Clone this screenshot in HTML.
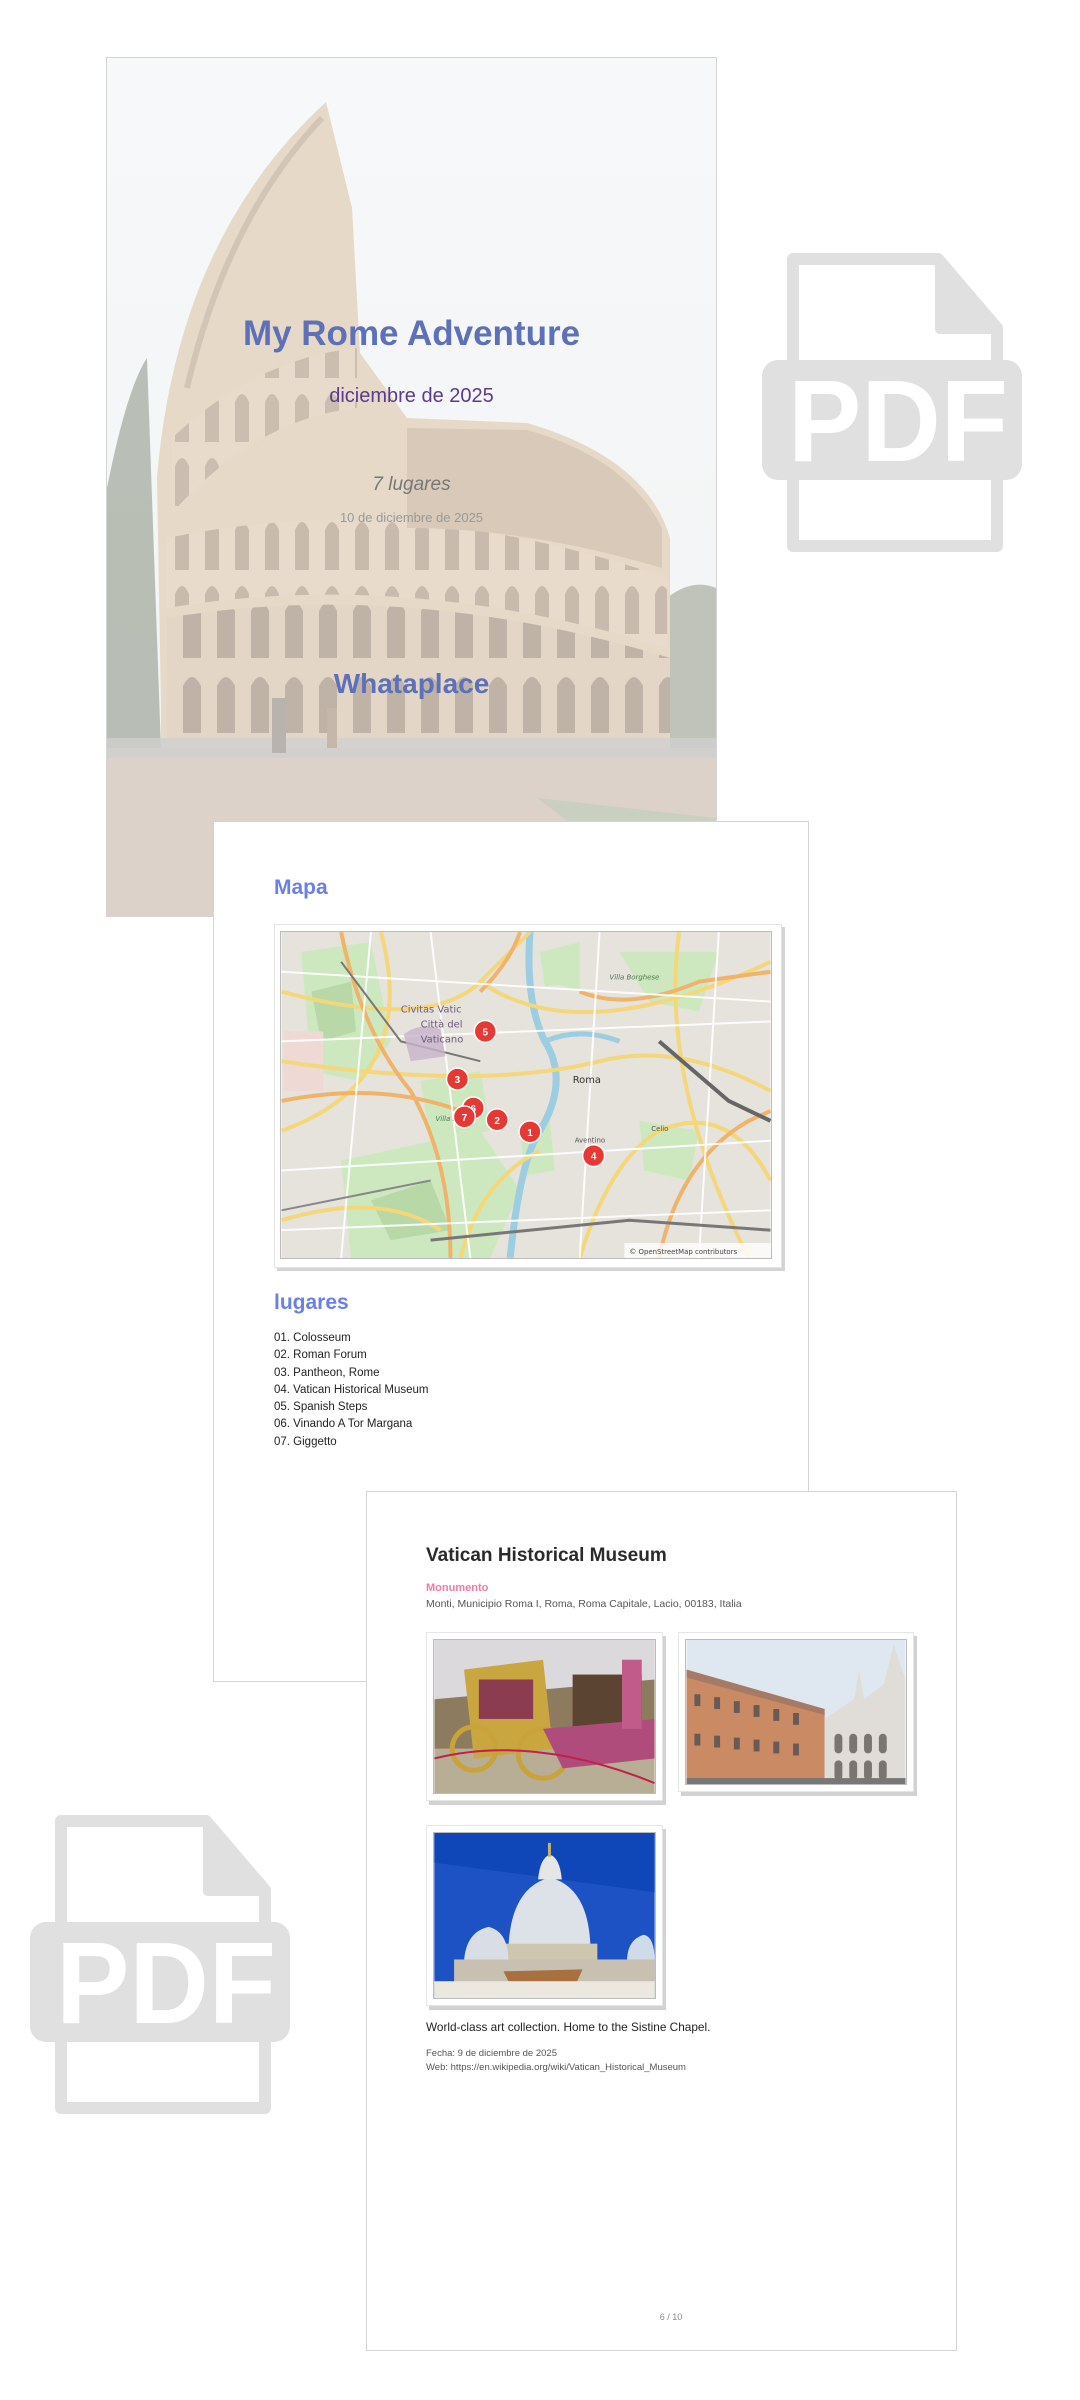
<!DOCTYPE html>
<html><head><meta charset="utf-8"><style>
*{margin:0;padding:0;box-sizing:border-box}
body{width:1080px;height:2400px;background:#fff;position:relative;overflow:hidden;font-family:"Liberation Sans",Arial,sans-serif}
.abs{position:absolute}
.page{position:absolute;background:#fff;border:1.5px solid #d4d4d4}
.t{position:absolute;white-space:nowrap}
.frame{position:absolute;background:#fff;border:1px solid #e6e6e6;box-shadow:3px 4px 0 #d2d2d2}
.frame>div,.frame>svg{position:absolute;left:6px;top:6px;border:1px solid #bbb}
</style></head><body>

<!-- PDF icon top right -->
<svg class="abs" style="left:760px;top:250px" width="262" height="305" viewBox="0 0 262 305">
<path d="M33 9 H178 L237 78 V296 H33 Z" fill="none" stroke="#e0e0e0" stroke-width="12" stroke-linejoin="round"/>
<path d="M175 6 L243 78 V84 H180 Q175 84 175 78 Z" fill="#e0e0e0"/>
<rect x="2" y="110" width="260" height="120" rx="16" fill="#e0e0e0"/>
<text x="28" y="211" textLength="220" lengthAdjust="spacingAndGlyphs" font-family="Liberation Sans" font-weight="bold" font-size="116" fill="#fff">PDF</text>
</svg>

<!-- PDF icon bottom left -->
<svg class="abs" style="left:28px;top:1812px" width="262" height="305" viewBox="0 0 262 305">
<path d="M33 9 H178 L237 78 V296 H33 Z" fill="none" stroke="#e0e0e0" stroke-width="12" stroke-linejoin="round"/>
<path d="M175 6 L243 78 V84 H180 Q175 84 175 78 Z" fill="#e0e0e0"/>
<rect x="2" y="110" width="260" height="120" rx="16" fill="#e0e0e0"/>
<text x="28" y="211" textLength="220" lengthAdjust="spacingAndGlyphs" font-family="Liberation Sans" font-weight="bold" font-size="116" fill="#fff">PDF</text>
</svg>

<!-- Cover page -->
<div class="page" style="left:106px;top:57px;width:611px;height:860px;overflow:hidden">
<svg class="abs" style="left:0;top:0" width="609" height="858" viewBox="0 0 609 858">
<defs>
<linearGradient id="sky" x1="0" y1="0" x2="0" y2="1"><stop offset="0" stop-color="#f6f8fa"/><stop offset="1" stop-color="#f1f3f3"/></linearGradient>
<pattern id="arch" x="0" y="0" width="34" height="75" patternUnits="userSpaceOnUse"><rect width="34" height="75" fill="#e3d6c6"/><path d="M8 75 V28 Q17 10 26 28 V75 Z" fill="#bfb3a8"/></pattern>
<pattern id="arch2" x="0" y="0" width="30" height="64" patternUnits="userSpaceOnUse"><rect width="30" height="64" fill="#e8dbcb"/><path d="M8 64 V24 Q15 8 22 24 V64 Z" fill="#c8bbad"/></pattern>
</defs>
<rect width="609" height="858" fill="url(#sky)"/>
<path d="M0 430 Q20 330 40 300 L55 720 L0 760 Z" fill="#9fa79a" opacity=".7"/>
<path d="M560 540 Q585 520 609 530 L609 720 L560 720 Z" fill="#a9ae9f" opacity=".7"/>
<path d="M54 650 L50 420 Q70 180 219 44 L245 150 L253 295 L300 360 L420 365 Q540 400 563 480 L563 700 L54 700 Z" fill="#e6d9c8"/>
<path d="M60 620 L60 560 Q300 520 563 600 L563 700 L60 700 Z" fill="url(#arch)"/>
<path d="M60 540 L60 480 Q300 430 560 520 L560 590 Q300 510 60 550 Z" fill="url(#arch2)"/>
<path d="M65 450 L65 380 Q150 300 250 290 L250 350 Q150 360 65 455 Z" fill="url(#arch2)" opacity=".9"/>
<path d="M300 370 L420 372 Q520 400 555 470 L555 510 Q420 470 300 470 Z" fill="#d9c9b8"/>
<path d="M80 330 Q120 160 215 60" stroke="#d2c5b5" stroke-width="6" fill="none"/>
<rect x="0" y="690" width="609" height="168" fill="#dcd2c9"/>
<rect x="0" y="680" width="609" height="20" fill="#cfcfd0" opacity=".8"/>
<path d="M430 740 L609 760 L609 790 L470 770 Z" fill="#c9cfc1"/>
<rect x="165" y="640" width="14" height="55" fill="#b9b3b0"/><rect x="220" y="650" width="10" height="40" fill="#c5b8aa"/>
</svg>
<div class="t" style="left:0;width:609px;text-align:center;top:256px;font-size:35px;font-weight:bold;color:#5d70b8">My Rome Adventure</div>
<div class="t" style="left:0;width:609px;text-align:center;top:327px;font-size:20px;color:#5b3a8f">diciembre de 2025</div>
<div class="t" style="left:0;width:609px;text-align:center;top:416px;font-size:19px;font-style:italic;color:#777">7 lugares</div>
<div class="t" style="left:0;width:609px;text-align:center;top:452px;font-size:13px;color:#999">10 de diciembre de 2025</div>
<div class="t" style="left:0;width:609px;text-align:center;top:610px;font-size:28px;font-weight:bold;color:#5d70b8">Whataplace</div>
</div>

<!-- Page 2 -->
<div class="page" style="left:213px;top:821px;width:596px;height:861px"></div>
<div class="t" style="left:274px;top:876px;font-size:21px;font-weight:bold;color:#6a80e6">Mapa</div>
<div class="abs" style="left:274px;top:924px;width:508px;height:344px;background:#fff;border:1px solid #e4e4e4;box-shadow:3px 3px 0 #d4d4d4"></div>
<svg class="abs" style="left:280px;top:931px;border:1px solid #bbb" width="492" height="328" viewBox="0 0 492 328">
<rect width="492" height="328" fill="#e6e2dc"/>
<g fill="#cde8bf">
<path d="M20 20 L90 10 L110 110 L80 150 L30 140 Z"/>
<path d="M60 230 L200 200 L240 260 L210 328 L70 328 Z"/>
<path d="M140 150 L200 140 L210 200 L150 210 Z"/>
<path d="M260 20 L300 10 L300 60 Q280 50 265 55 Z"/>
<path d="M340 20 L440 20 L420 80 L370 70 Z"/>
<path d="M240 200 L270 190 L275 240 L245 245 Z"/>
<path d="M360 190 L420 200 L410 250 L365 240 Z"/>
</g>
<g fill="#b8d8a8"><path d="M90 270 L150 250 L170 300 L110 310 Z"/><path d="M30 60 L70 50 L75 100 L40 110 Z"/></g>
<rect x="2" y="100" width="40" height="60" fill="#eed9d4"/>
<path d="M250 0 Q245 70 265 110 Q290 150 260 200 Q240 230 230 328" stroke="#9ccde0" stroke-width="7" fill="none"/>
<path d="M265 110 Q300 95 340 110" stroke="#9ccde0" stroke-width="5" fill="none"/>
<g stroke="#f3d77a" stroke-width="4" fill="none">
<path d="M0 60 Q150 100 200 50 L250 0"/><path d="M100 0 Q140 150 0 200"/><path d="M200 50 Q300 120 492 30"/>
<path d="M0 130 Q200 160 320 130 Q400 110 492 160"/><path d="M300 328 Q330 230 380 200 Q450 170 492 250"/>
<path d="M180 328 Q200 250 260 220"/><path d="M400 0 Q380 150 470 328"/><path d="M0 290 Q100 260 160 300"/>
</g>
<g stroke="#f0b36a" stroke-width="4" fill="none">
<path d="M60 0 Q80 100 130 160 Q170 230 170 328"/><path d="M0 170 Q100 150 180 180"/><path d="M300 60 Q350 80 420 50 L492 40"/>
<path d="M380 328 Q400 230 470 190 L492 180"/><path d="M200 60 Q230 30 240 0"/>
</g>
<g stroke="#fff" stroke-width="2" fill="none" opacity=".9">
<path d="M0 40 L492 70"/><path d="M0 110 L492 90"/><path d="M0 240 L492 210"/><path d="M150 0 L190 328"/><path d="M320 0 L300 328"/><path d="M440 0 L420 328"/><path d="M0 300 L492 280"/><path d="M90 0 L60 328"/>
</g>
<path d="M60 30 L120 110 L200 130" stroke="#777" stroke-width="2" fill="none"/>
<path d="M380 110 L450 170 L492 190" stroke="#666" stroke-width="4" fill="none"/>
<path d="M0 280 L150 250" stroke="#888" stroke-width="2" fill="none"/>
<path d="M150 310 L350 290 L492 300" stroke="#777" stroke-width="3" fill="none"/>
<path d="M123 103 Q140 90 160 98 L165 125 L130 130 Z" fill="#c8b4cc" opacity=".8"/>
<text x="120" y="81" font-family="DejaVu Sans" font-size="10" fill="#6e5a80">Civitas Vatic</text>
<text x="140" y="96" font-family="DejaVu Sans" font-size="10" fill="#6e5a80">Città del</text>
<text x="140" y="111" font-family="DejaVu Sans" font-size="10" fill="#6e5a80">Vaticano</text>
<text x="293" y="152" font-family="DejaVu Sans" font-size="10" fill="#333">Roma</text>
<text x="295" y="212" font-family="DejaVu Sans" font-size="7" fill="#555">Aventino</text>
<text x="372" y="200" font-family="DejaVu Sans" font-size="7" fill="#555">Celio</text>
<text x="155" y="190" font-family="DejaVu Sans" font-size="7" font-style="italic" fill="#4a7a4a">Villa Doria</text>
<text x="330" y="48" font-family="DejaVu Sans" font-size="7" font-style="italic" fill="#4a7a4a">Villa Borghese</text>
<rect x="345" y="313" width="147" height="15" fill="#fff" opacity=".8"/>
<text x="350" y="324" font-family="DejaVu Sans" font-size="7" fill="#444">© OpenStreetMap contributors</text>
<g font-family="Liberation Sans" font-weight="bold" font-size="10" fill="#fff" text-anchor="middle">
<g><circle cx="205" cy="100" r="11" fill="#e53935" stroke="#fff" stroke-width="1.5"/><text x="205" y="104">5</text></g>
<g><circle cx="177" cy="148" r="11" fill="#e53935" stroke="#fff" stroke-width="1.5"/><text x="177" y="152">3</text></g>
<g><circle cx="193" cy="177" r="11" fill="#e53935" stroke="#fff" stroke-width="1.5"/><text x="193" y="181">6</text></g>
<g><circle cx="184" cy="186" r="11" fill="#e53935" stroke="#fff" stroke-width="1.5"/><text x="184" y="190">7</text></g>
<g><circle cx="217" cy="189" r="11" fill="#e53935" stroke="#fff" stroke-width="1.5"/><text x="217" y="193">2</text></g>
<g><circle cx="250" cy="201" r="11" fill="#e53935" stroke="#fff" stroke-width="1.5"/><text x="250" y="205">1</text></g>
<g><circle cx="314" cy="225" r="11" fill="#e53935" stroke="#fff" stroke-width="1.5"/><text x="314" y="229">4</text></g>
</g>
</svg>
<div class="t" style="left:274px;top:1291px;font-size:21px;font-weight:bold;color:#6a80e6">lugares</div>
<div class="t" style="left:274px;top:1330px;font-size:11.5px;color:#222;line-height:17.3px">01. Colosseum<br>02. Roman Forum<br>03. Pantheon, Rome<br>04. Vatican Historical Museum<br>05. Spanish Steps<br>06. Vinando A Tor Margana<br>07. Giggetto</div>

<!-- Page 3 -->
<div class="page" style="left:366px;top:1491px;width:591px;height:860px"></div>
<div class="t" style="left:426px;top:1545px;font-size:19px;font-weight:bold;color:#2a2a2a">Vatican Historical Museum</div>
<div class="t" style="left:426px;top:1582px;font-size:11px;font-weight:bold;color:#f07aa8">Monumento</div>
<div class="t" style="left:426px;top:1598px;font-size:10.5px;color:#555">Monti, Municipio Roma I, Roma, Roma Capitale, Lacio, 00183, Italia</div>

<div class="frame" style="left:426px;top:1632px;width:237px;height:169px">
<svg width="223" height="155" viewBox="0 0 223 155">
<rect width="223" height="155" fill="#8d7b5f"/>
<path d="M0 0 H223 V40 L0 60 Z" fill="#dcd9dc"/>
<path d="M0 110 H223 V155 H0 Z" fill="#b8ad95"/>
<rect x="140" y="35" width="70" height="60" fill="#5b4432"/>
<path d="M30 30 L110 20 L120 110 L40 120 Z" fill="#c9a640"/>
<rect x="45" y="40" width="55" height="40" fill="#8c3c50"/>
<circle cx="40" cy="110" r="22" fill="none" stroke="#c9a23a" stroke-width="5"/>
<circle cx="110" cy="115" r="25" fill="none" stroke="#c9a23a" stroke-width="5"/>
<path d="M110 90 L223 80 L223 120 L130 130 Z" fill="#b04c7c"/>
<rect x="190" y="20" width="20" height="70" fill="#c05b8a"/>
<path d="M0 120 Q100 95 223 145" stroke="#c0204a" stroke-width="2" fill="none"/>
</svg></div>

<div class="frame" style="left:678px;top:1632px;width:236px;height:160px">
<svg width="222" height="146" viewBox="0 0 222 146">
<rect width="222" height="146" fill="#dfe8f0"/>
<path d="M0 30 L140 70 L140 146 L0 146 Z" fill="#c98a64"/>
<path d="M0 30 L140 70 L140 76 L0 38 Z" fill="#a57a66"/>
<g fill="#6a5a55"><rect x="8" y="55" width="6" height="12"/><rect x="28" y="58" width="6" height="12"/><rect x="48" y="62" width="6" height="12"/><rect x="68" y="66" width="6" height="12"/><rect x="88" y="70" width="6" height="12"/><rect x="108" y="74" width="6" height="12"/>
<rect x="8" y="95" width="6" height="12"/><rect x="28" y="97" width="6" height="12"/><rect x="48" y="99" width="6" height="12"/><rect x="68" y="101" width="6" height="12"/><rect x="88" y="103" width="6" height="12"/><rect x="108" y="105" width="6" height="12"/></g>
<path d="M140 80 L170 60 L175 30 L180 60 L200 45 L210 5 L222 40 L222 146 L140 146 Z" fill="#e0ddd8"/>
<g fill="#7a7570"><rect x="150" y="95" width="8" height="20" rx="4"/><rect x="165" y="95" width="8" height="20" rx="4"/><rect x="180" y="95" width="8" height="20" rx="4"/><rect x="195" y="95" width="8" height="20" rx="4"/><rect x="150" y="122" width="8" height="20" rx="4"/><rect x="165" y="122" width="8" height="20" rx="4"/><rect x="180" y="122" width="8" height="20" rx="4"/><rect x="195" y="122" width="8" height="20" rx="4"/></g>
<rect x="0" y="140" width="222" height="6" fill="#777"/>
</svg></div>

<div class="frame" style="left:426px;top:1825px;width:237px;height:181px">
<svg width="223" height="167" viewBox="0 0 223 167">
<rect width="223" height="167" fill="#1c52c4"/>
<path d="M0 0 H223 V60 L0 30 Z" fill="#0f47b8"/>
<path d="M75 115 Q78 55 117 45 Q156 55 158 115 Z" fill="#dde2e8"/>
<path d="M105 47 Q107 25 117 22 Q127 25 129 47 Z" fill="#e6e6e6"/>
<rect x="115" y="10" width="3" height="14" fill="#c8b070"/>
<rect x="70" y="112" width="95" height="30" fill="#cfc6b0"/>
<path d="M30 130 Q32 100 55 95 Q75 100 75 130 Z" fill="#d9dee6"/>
<path d="M195 130 Q195 108 212 103 Q223 105 223 130 Z" fill="#cfdbe6"/>
<rect x="20" y="128" width="203" height="39" fill="#c8c0b0"/>
<path d="M70 140 L150 138 L140 160 L80 160 Z" fill="#a67040"/>
<rect x="0" y="150" width="223" height="17" fill="#ece8e0"/>
</svg></div>

<div class="t" style="left:426px;top:2020px;font-size:11.8px;color:#222">World-class art collection. Home to the Sistine Chapel.</div>
<div class="t" style="left:426px;top:2048px;font-size:9.5px;color:#555">Fecha: 9 de diciembre de 2025</div>
<div class="t" style="left:426px;top:2062px;font-size:9.5px;color:#555">Web: https://en.wikipedia.org/wiki/Vatican_Historical_Museum</div>
<div class="t" style="left:651px;top:2312px;width:40px;text-align:center;font-size:9px;color:#888">6 / 10</div>
</body></html>
